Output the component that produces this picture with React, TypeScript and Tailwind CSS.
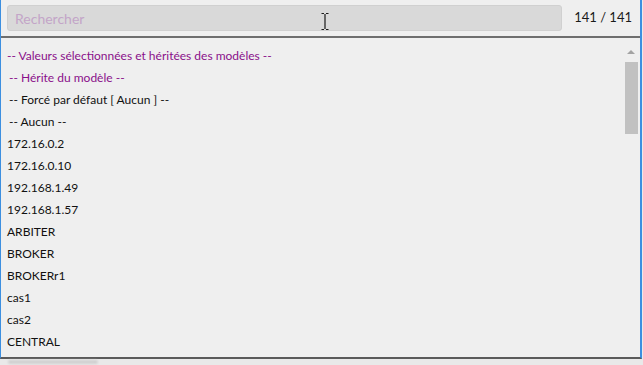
import React from "react";

const items = [
  { label: "-- Valeurs sélectionnées et héritées des modèles --", purple: true, indent: false },
  { label: "-- Hérite du modèle --", purple: true, indent: true },
  { label: "-- Forcé par défaut [ Aucun ] --", purple: false, indent: true },
  { label: "-- Aucun --", purple: false, indent: true },
  { label: "172.16.0.2" },
  { label: "172.16.0.10" },
  { label: "192.168.1.49" },
  { label: "192.168.1.57" },
  { label: "ARBITER" },
  { label: "BROKER" },
  { label: "BROKERr1" },
  { label: "cas1" },
  { label: "cas2" },
  { label: "CENTRAL" },
];

const App = () => {
  return (
    <div
      className="w-[643px] h-[365px] bg-[#e9e9e9] overflow-hidden"
      style={{ fontFamily: "Lato, 'Open Sans', sans-serif" }}
    >
      <div className="w-[642px] h-[359px] bg-[#efefef] border-l border-r-2 border-[#3c8fe0] border-b-2 border-b-[#5a5a5a] flex flex-col">
        {/* search bar */}
        <div className="flex items-center h-[38px] pl-[6px] pr-[8px] border-b-2 border-[#6e6e6e]">
          <div className="relative flex-1 h-[26px] bg-[#d9d9d9] border border-[#d0d0d0] rounded-[3px] flex items-center px-[7px]">
            <span className="text-[14px] text-[#c3a5c8]">Rechercher</span>
            {/* text cursor */}
            <svg className="absolute left-[313px] top-[7px]" width="8" height="17" viewBox="0 0 8 17">
              <path d="M0.5 0.5h2.5M5 0.5h2.5M4 1v15M0.5 16.5h2.5M5 16.5h2.5" stroke="#1a1a1a" strokeWidth="1.2" fill="none" />
            </svg>
          </div>
          <span className="ml-[12px] text-[13px] text-[#1a1a1a]">141 / 141</span>
        </div>

        {/* list */}
        <div className="flex flex-1 min-h-0">
          <div className="flex-1 pt-[7px] overflow-hidden">
            {items.map((item, i) => (
              <div
                key={i}
                className={`h-[22px] flex items-center text-[12px] whitespace-pre ${
                  item.indent ? "pl-[8px]" : "pl-[6px]"
                } ${item.purple ? "text-[#8a0f8a]" : "text-[#111]"}`}
              >
                {item.label}
              </div>
            ))}
          </div>
          {/* scrollbar */}
          <div className="w-[16px] mr-[1px] flex flex-col items-center pt-[12px]">
            <div className="w-0 h-0 border-l-[4px] border-r-[4px] border-b-[4px] border-l-transparent border-r-transparent border-b-[#a3a3a3]" />
            <div className="mt-[8px] w-[13px] h-[72px] bg-[#c1c1c1]" />
          </div>
        </div>
      </div>
      <div className="ml-[8px] mt-[1px] w-[90px] h-[4px] bg-[#d0d0d0] rounded-full blur-[1px]" />
    </div>
  );
};

export default App;
